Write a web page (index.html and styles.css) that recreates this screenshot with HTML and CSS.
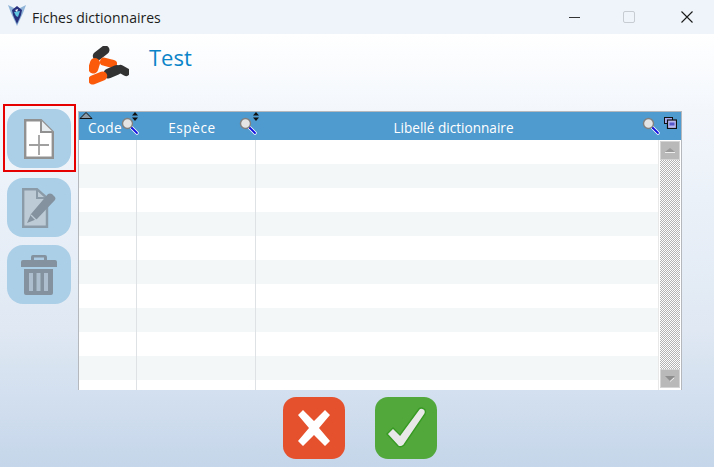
FILE: index.html
```html
<!DOCTYPE html>
<html lang="fr">
<head>
<meta charset="utf-8">
<title>Fiches dictionnaires</title>
<link rel="stylesheet" href="styles.css">
</head>
<body>
<div class="window">
  <header class="titlebar">
    <svg class="app-icon" width="20" height="24" viewBox="0 0 20 24">
      <path d="M1 2 L7 5 L13 5 L19 2 L16 10 L10 23 L4 10 Z" fill="#8fb4d8"/>
      <path d="M5 7 L10 3 L15 7 L14 12 L10 21 L6 12 Z" fill="#26307c"/>
      <path d="M7 9 L13 8 L11 14 L9 13 Z" fill="#5ec4e0"/>
      <path d="M8 7 L11 6 L10 9 Z" fill="#fff"/>
    </svg>
    <span class="title">Fiches dictionnaires</span>
    <div class="controls">
      <span class="ctl-min"></span>
      <span class="ctl-max"></span>
      <svg class="ctl-close" width="12" height="12" viewBox="0 0 12 12"><path d="M0.5 0.5 L11.5 11.5 M11.5 0.5 L0.5 11.5" stroke="#1a1a1a" stroke-width="1.1" fill="none"/></svg>
    </div>
  </header>
  <section class="banner">
    <svg class="logo" width="40" height="40" viewBox="0 0 40 40" fill="none" stroke-linecap="round">
      <path d="M8.3 10 L16 4" stroke="#333" stroke-width="9"/>
      <path d="M6 17 L4.3 22.5" stroke="#fa5a0a" stroke-width="10"/>
      <path d="M15 15.7 L24 18" stroke="#fa5a0a" stroke-width="8"/>
      <path d="M19.5 27.5 L27.7 24" stroke="#333" stroke-width="10"/>
      <path d="M31.7 23 L37 26" stroke="#333" stroke-width="8"/>
      <path d="M3.7 34 L13.7 30" stroke="#fa5a0a" stroke-width="9"/>
    </svg>
    <span class="test">Test</span>
  </section>
  <main class="content">
    <aside class="sidebar">
      <div class="selected">
        <button class="tool" type="button" aria-label="Ajouter">
          <svg width="30" height="40" viewBox="0 0 30 40"><path d="M1.2 1.2 H17 L28.8 13 V38.8 H1.2 Z" fill="#fff" stroke="#919191" stroke-width="2.4"/><path d="M17 1.2 V13 H28.8" fill="#e8edf0" stroke="#919191" stroke-width="2"/><path d="M15 16 V36 M5 26 H25" stroke="#a0a0a0" stroke-width="1.8"/></svg>
        </button>
      </div>
      <button class="tool tool-edit" type="button" aria-label="Modifier">
        <svg width="34" height="40" viewBox="0 0 34 40"><path d="M1.2 1.2 H15 L25 10 V38.8 H1.2 Z" fill="#bccbd6" stroke="#8c9ba8" stroke-width="2.4"/><path d="M15 1.2 V10 H25" fill="none" stroke="#8c9ba8" stroke-width="2"/><path d="M5 35 L9 26 L26 6 Q28 5 30 6 L33 9 Q34 11 33 12 L15 31 Z" fill="#83929e"/><path d="M9 27 L14 32" stroke="#bccbd6" stroke-width="1.2"/></svg>
      </button>
      <button class="tool tool-trash" type="button" aria-label="Supprimer">
        <svg width="36" height="40" viewBox="0 0 36 40"><path d="M0 7 Q0 5 2 5 H10 V2 Q10 0 12 0 H24 Q26 0 26 2 V5 H34 Q36 5 36 7 V12 H0 Z" fill="#83929e"/><rect x="13" y="2.5" width="10" height="2.5" fill="#abcce4"/><path d="M3 14 H32 V38 Q32 40 30 40 H5 Q3 40 3 38 Z" fill="#83929e"/><path d="M8 18 H12 V36 H8 Z M15.5 18 H19.5 V36 H15.5 Z M23 18 H27 V36 H23 Z" fill="#adbfce"/></svg>
      </button>
    </aside>
    <div class="grid">
      <div class="grid-head">
        <svg class="sort-main" width="14" height="7" viewBox="0 0 14 7"><path d="M7 .5 L13 6.5 H1 Z" fill="#8b9aa4" stroke="#111"/></svg>
        <div class="col col-code"><span>Code</span>
          <svg class="lens" width="18" height="18"><use href="#lens"/></svg>
          <svg class="sort" width="6" height="9" viewBox="0 0 6 9"><path d="M3 0 L6 3.5 H0 Z M3 9 L0 5.5 H6 Z" fill="#111"/></svg>
        </div>
        <div class="col col-esp"><span>Espèce</span>
          <svg class="lens" width="18" height="18"><use href="#lens"/></svg>
          <svg class="sort" width="6" height="9" viewBox="0 0 6 9"><path d="M3 0 L6 3.5 H0 Z M3 9 L0 5.5 H6 Z" fill="#111"/></svg>
        </div>
        <div class="col col-lib"><span>Libellé dictionnaire</span>
          <svg class="lens" width="18" height="18"><use href="#lens"/></svg>
          <svg class="layers" width="13" height="12" viewBox="0 0 13 12"><rect x=".5" y=".5" width="8" height="6" fill="#a9a9ee" stroke="#111"/><rect x="3.5" y="3" width="9" height="8.5" fill="#b9b9f2" stroke="#111" stroke-width="1.2"/><rect x="5.5" y="5.5" width="5" height="3" fill="#55c"/></svg>
        </div>
      </div>
      <div class="grid-body">
        <div class="rows">
          <div class="row"><i></i><i></i><i></i></div>
          <div class="row alt"><i></i><i></i><i></i></div>
          <div class="row"><i></i><i></i><i></i></div>
          <div class="row alt"><i></i><i></i><i></i></div>
          <div class="row"><i></i><i></i><i></i></div>
          <div class="row alt"><i></i><i></i><i></i></div>
          <div class="row"><i></i><i></i><i></i></div>
          <div class="row alt"><i></i><i></i><i></i></div>
          <div class="row"><i></i><i></i><i></i></div>
          <div class="row alt"><i></i><i></i><i></i></div>
          <div class="row"><i></i><i></i><i></i></div>
        </div>
        <div class="scrollbar">
          <div class="arrow"><svg width="10" height="5" viewBox="0 0 10 5"><path d="M5 0 L10 4 H0 Z" fill="#9a9a9a"/><path d="M0 4.5 H10" stroke="#eee"/></svg></div>
          <div class="track"></div>
          <div class="arrow"><svg width="10" height="6" viewBox="0 0 10 6"><path d="M0 0 H10 L5 5 Z" fill="#8e8e8e"/><path d="M5 5.5 L9 2" stroke="#eee"/></svg></div>
        </div>
      </div>
    </div>
  </main>
  <footer class="actions">
    <button class="act act-cancel" type="button" aria-label="Annuler">
      <svg width="40" height="38" viewBox="0 0 40 38"><path d="M4 6 L9 1 L20 12 L31 1 L36 6 L25 19 L36 32 L31 37 L20 26 L9 37 L4 32 L15 19 Z" fill="#fff"/></svg>
    </button>
    <button class="act act-ok" type="button" aria-label="Valider">
      <svg width="44" height="44" viewBox="0 0 44 44"><path d="M3 28 L9 22 L16 29 L35 3 Q37 1 40 3 L41 4 Q42 6 41 8 L20 39 Q17 42 14 40 Z" fill="#e8e8e8" stroke="#379a22" stroke-width="1.4"/></svg>
    </button>
  </footer>
</div>
<svg class="defs" width="0" height="0">
  <defs>
    <g id="lens">
      <path d="M10 10 L16 16" stroke="#fff" stroke-width="3.4" stroke-linecap="round"/>
      <path d="M10.5 10.5 L16 16" stroke="#1010e0" stroke-width="1.8" stroke-linecap="round"/>
      <circle cx="6.5" cy="6.5" r="5" fill="#e4e4e4" stroke="#808080" stroke-width="1.4"/>
    </g>
  </defs>
</svg>
</body>
</html>
```
FILE: styles.css
```css
html, body { margin: 0; padding: 0; height: 100%; }
body { font-family: "Liberation Sans", Arial, sans-serif; overflow: hidden; }
.window {
  width: 714px; height: 467px; display: flex; flex-direction: column;
  background: linear-gradient(180deg, #ffffff 34px, #f3f7fc 110px, #dfe8f3 330px, #c5d6ea 467px);
}
.defs { position: absolute; }
.titlebar {
  height: 34px; flex: none; display: flex; align-items: center;
  background: #eef4f9; padding-left: 7px; box-sizing: border-box;
}
.app-icon { flex: none; margin-top: -4px; }
.title {
  margin-left: 5px; font: 14px "Open Sans", "Noto Sans", sans-serif; color: #1c1c1c;
}
.controls { margin-left: auto; display: flex; align-items: center; padding-right: 21px; }
.ctl-min { width: 11px; height: 1px; background: #333; margin-right: 43px; margin-left: -1px; }
.ctl-max { width: 10px; height: 10px; border: 1px solid #c6ccd1; border-radius: 2px; margin-right: 46px; }
.ctl-close { display: block; }
.banner { height: 70px; flex: none; display: flex; box-sizing: border-box; padding: 12px 0 0 89px; }
.logo { display: block; }
.test { margin: -3px 0 0 20px; font: 22px/28px "Open Sans", "DejaVu Sans", sans-serif; color: #0a84c9; }
.content { flex: none; display: flex; height: 286px; }
.sidebar { width: 78px; flex: none; display: flex; flex-direction: column; align-items: flex-start; padding-left: 7px; box-sizing: border-box; }
.selected {
  width: 73px; height: 68px; box-sizing: border-box; border: 2px solid #e60000;
  display: flex; align-items: flex-start; padding: 3px 0 0 2px;
  margin: 0 0 6px -4px;
}
.tool {
  width: 64px; height: 59px; padding: 0; border: 0; border-radius: 16px; background: #abcfe7;
  display: flex; align-items: center; justify-content: center; flex: none;
}
.tool-edit { margin-bottom: 8px; }
.grid {
  width: 604px; height: 279px; box-sizing: border-box; margin-top: 7px;
  border: 1px solid #b5b8bc; border-bottom: 0; display: flex; flex-direction: column; background: #fff;
}
.grid-head { height: 28px; flex: none; display: flex; background: #4f9ace; position: relative; color: #fff; font: 13.6px "Open Sans", "Noto Sans", sans-serif; }
.sort-main { position: absolute; left: 0; top: 0; }
.col { position: relative; display: flex; align-items: center; justify-content: center; height: 100%; box-sizing: border-box; padding-top: 2px; }
.col-code { width: 58px; justify-content: flex-start; padding-left: 9px; letter-spacing: .3px; }
.col-esp { width: 119px; padding-right: 9px; letter-spacing: .6px; }
.col-lib { flex: 1; padding-right: 30px; }
.lens { position: absolute; top: 5px; }
.col-code .lens { left: 42px; }
.col-esp .lens { left: 102px; }
.col-lib .lens { left: 386px; }
.sort { position: absolute; top: 0; right: 0; }
.col-code .sort { right: -1px; }
.col-esp .sort { right: -3px; }
.layers { position: absolute; left: 408px; top: 5px; }
.grid-body { flex: 1; min-height: 0; display: flex; overflow: hidden; }
.rows { flex: 1; overflow: hidden; min-width: 0; }
.row { height: 24px; display: flex; background: #fff; }
.row.alt { background: #f4f7f7; }
.row i { display: block; height: 100%; box-sizing: border-box; border-right: 1px solid #dfe2e4; }
.row i:nth-child(1) { width: 58px; }
.row i:nth-child(2) { width: 119px; }
.row i:nth-child(3) { flex: 1; border-right: 1px solid #e8e8e8; }
.scrollbar { width: 22px; flex: none; display: flex; flex-direction: column; background: #fff; box-sizing: border-box; padding: 1px 1px 0 1px; }
.arrow { height: 19px; flex: none; background: #b9b9b9; display: flex; align-items: center; justify-content: center; border: 1px solid #d4d4d4; box-sizing: border-box; }
.track {
  flex: 1; background-color: #fff;
  background-image: conic-gradient(#b4b4b4 25%, #fff 0 50%, #b4b4b4 0 75%, #fff 0);
  background-size: 2px 2px;
}
.scrollbar .arrow:last-child { margin-bottom: 2px; }
.actions { flex: none; display: flex; gap: 30px; padding: 7px 0 0 283px; }
.act { width: 62px; height: 62px; padding: 0; border: 0; border-radius: 13px; display: flex; align-items: center; justify-content: center; }
.act-cancel { background: #e5512d; }
.act-ok { background: #52a83b; }
```
